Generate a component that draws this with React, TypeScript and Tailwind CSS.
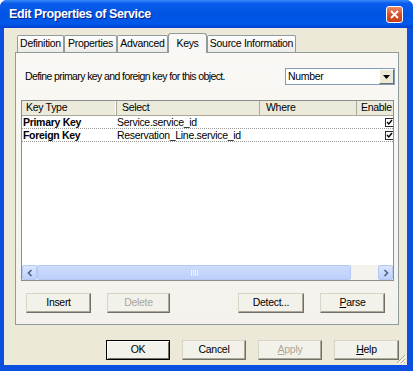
import type { ReactNode } from "react";

const FONT = "font-['Liberation_Sans',Arial,sans-serif]";
const T = "text-[10.5px] tracking-[-0.3px]";

function Tab({ label, w, active }: { label: string; w: number; active?: boolean }) {
  if (active) {
    return (
      <div
        style={{ width: w }}
        className={`relative z-10 -mb-px flex h-[20px] items-start justify-center whitespace-nowrap rounded-t-[3px] border border-b-0 border-[#919b9c] bg-[#f8f7f3] pt-[2px] ${T} text-black`}
      >
        {label}
      </div>
    );
  }
  return (
    <div
      style={{ width: w }}
      className={`flex h-[17px] items-center justify-center whitespace-nowrap rounded-t-[2px] border border-b-0 border-[#919b9c] bg-[linear-gradient(#ffffff,#ecebe6)] ${T} text-black`}
    >
      {label}
    </div>
  );
}

function Btn({
  children,
  disabled,
  def,
  w = 64,
}: {
  children: ReactNode;
  disabled?: boolean;
  def?: boolean;
  w?: number;
}) {
  return (
    <div
      style={{ width: w }}
      className={
        `flex h-[20px] items-center justify-center border ${T} ` +
        (def
          ? "border-black shadow-[inset_1px_1px_0_#ffffff,inset_-1px_-1px_0_#716f64]"
          : "border-t-[#d8d5c8] border-l-[#d8d5c8] border-r-[#716f64] border-b-[#716f64] shadow-[inset_-1px_-1px_0_#aca899]") +
        " bg-[#f2f1ea] " +
        (disabled ? "text-[#aca899]" : "text-black")
      }
    >
      {children}
    </div>
  );
}

function Check() {
  return (
    <svg width="8" height="9" viewBox="0 0 8 9" className="shrink-0">
      <rect x="0.5" y="0.5" width="8" height="8" fill="#fff" stroke="#2b2b2b" />
      <path d="M2 4 L3.8 6 L7 2" fill="none" stroke="#000" strokeWidth="1.4" />
    </svg>
  );
}

function ScrollArrow({ dir }: { dir: "l" | "r" }) {
  return (
    <div className="flex h-[15px] w-[15px] items-center justify-center rounded-[2px] border border-[#b4c8f6] bg-[linear-gradient(#dbe6fd,#bcd0fa)]">
      <svg width="6" height="8" viewBox="0 0 6 8">
        <path
          d={dir === "l" ? "M4.5 1 L1.5 4 L4.5 7" : "M1.5 1 L4.5 4 L1.5 7"}
          fill="none"
          stroke="#4d6185"
          strokeWidth="1.6"
        />
      </svg>
    </div>
  );
}

export default function App() {
  return (
    <div className={`${FONT} flex h-[371px] w-[413px] flex-col overflow-hidden rounded-t-[7px] bg-[#0a4fe0]`}>
      {/* title bar */}
      <div className="flex h-[28px] shrink-0 items-center justify-between bg-[linear-gradient(#3b8cf8_0%,#0a5ced_12%,#0054e3_50%,#0058ea_85%,#0040d0_100%)] pl-[9px] pr-[10px]">
        <span className="text-[12.5px] font-bold tracking-[-0.4px] text-white [text-shadow:1px_1px_0_#0a1e8c]">
          Edit Properties of Service
        </span>
        <div className="flex h-[17px] w-[17px] items-center justify-center rounded-[3px] border border-white bg-[linear-gradient(#e98a6a,#d8502a_50%,#c6401c)]">
          <svg width="9" height="9" viewBox="0 0 9 9">
            <path d="M1 1 L8 8 M8 1 L1 8" stroke="#fff" strokeWidth="1.8" />
          </svg>
        </div>
      </div>

      {/* body */}
      <div className="relative mb-[6px] ml-[4px] mr-[6px] flex flex-1 flex-col bg-[#ece9d8] pl-[11px] pr-[8px] pt-[5px]">
        {/* tabs */}
        <div className="flex items-end pl-[2px]">
          <Tab label="Definition" w={47} />
          <Tab label="Properties" w={53} />
          <Tab label="Advanced" w={51} />
          <Tab label="Keys" w={39} active />
          <Tab label="Source Information" w={89} />
        </div>

        {/* panel */}
        <div className="flex h-[273px] flex-col border border-[#919b9c] bg-[linear-gradient(#f9f8f4,#f3f2ec)]">
          <div className="mt-[15px] flex h-[17px] items-center justify-between pl-[9px] pr-[3px]">
            <span className="text-[10.5px] tracking-[-0.6px] text-black">
              Define primary key and foreign key for this object.
            </span>
            <div className="flex h-[17px] w-[110px] items-center border border-[#7f9db9] bg-white">
              <span className={`flex-1 pl-[2px] ${T} text-black`}>Number</span>
              <div className="flex h-[15px] w-[15px] items-center justify-center border border-t-white border-l-white border-r-[#716f64] border-b-[#716f64] bg-[#ece9d8]">
                <svg width="7" height="4" viewBox="0 0 7 4">
                  <path d="M0 0 H7 L3.5 4 Z" fill="#000" />
                </svg>
              </div>
            </div>
          </div>

          {/* grid */}
          <div className="ml-[5px] mr-[4px] mt-[15px] flex h-[181px] flex-col border border-[#8c8c8c] bg-white">
            <div className={`flex h-[15px] shrink-0 overflow-hidden border-b border-[#aca899] bg-[#ebeadb] ${T} text-black`}>
              <div className="flex w-[95px] shrink-0 items-center border-r border-[#aca899] pl-[4px] shadow-[inset_-1px_0_0_#ffffff]">Key Type</div>
              <div className="flex w-[143px] shrink-0 items-center border-r border-[#aca899] pl-[5px]">Select</div>
              <div className="flex w-[97px] shrink-0 items-center border-r border-[#aca899] pl-[6px]">Where</div>
              <div className="flex flex-1 items-center whitespace-nowrap pl-[4px]">Enable</div>
            </div>
            {[
              ["Primary Key", "Service.service_id"],
              ["Foreign Key", "Reservation_Line.service_id"],
            ].map(([k, s]) => (
              <div key={k} className={`flex h-[13px] shrink-0 items-center border-b border-dotted border-[#9a9a9a] ${T} leading-[12px] text-black`}>
                <div className="w-[95px] shrink-0 pl-[1px] font-bold">{k}</div>
                <div className="w-[143px] shrink-0">{s}</div>
                <div className="w-[97px] shrink-0" />
                <div className="flex flex-1 justify-end">
                  <Check />
                </div>
              </div>
            ))}
            <div className="flex-1" />
            {/* h scrollbar */}
            <div className="flex h-[15px] shrink-0 items-center bg-[#f4f3ee]">
              <ScrollArrow dir="l" />
              <div className="flex h-[15px] w-[314px] items-center justify-center rounded-[2px] border border-[#b4c8f6] bg-[linear-gradient(#cddbfc,#bdd0fa)]">
                <svg width="7" height="6" viewBox="0 0 7 6">
                  <path d="M0.5 0 V6 M2.5 0 V6 M4.5 0 V6 M6.5 0 V6" stroke="#eef3fe" strokeWidth="1" />
                </svg>
              </div>
              <div className="flex-1" />
              <ScrollArrow dir="r" />
            </div>
          </div>

          {/* panel buttons */}
          <div className="mt-[12px] flex items-center pl-[10px]">
            <Btn w={65}>Insert</Btn>
            <div className="w-[16px]" />
            <Btn w={63} disabled>Delete</Btn>
            <div className="w-[68px]" />
            <Btn w={66}>Detect...</Btn>
            <div className="w-[16px]" />
            <Btn w={65}>
              <span className="underline">P</span>arse
            </Btn>
          </div>
        </div>

        {/* dialog buttons */}
        <div className="mt-[15px] flex items-center justify-end gap-[12px]">
          <Btn def>OK</Btn>
          <Btn>Cancel</Btn>
          <Btn disabled>
            <span className="underline">A</span>pply
          </Btn>
          <Btn w={65}>
            <span className="underline">H</span>elp
          </Btn>
        </div>

        {/* resize grip */}
        <svg width="11" height="11" viewBox="0 0 11 11" className="absolute bottom-[1px] right-[1px]">
          <path d="M10 2 L2 10 M10 6 L6 10 M10 9 L9 10" stroke="#aca899" strokeWidth="1" />
          <path d="M11 3 L3 11 M11 7 L7 11" stroke="#ffffff" strokeWidth="1" />
        </svg>
      </div>
    </div>
  );
}
